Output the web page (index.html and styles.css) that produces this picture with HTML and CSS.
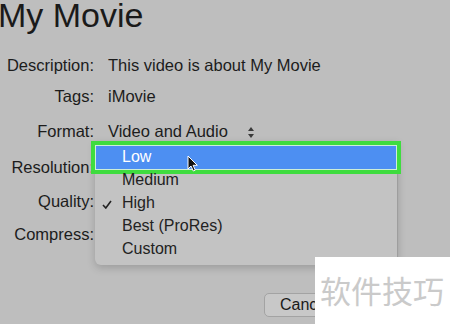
FILE: index.html
```html
<!DOCTYPE html>
<html lang="en">
<head>
    <meta charset="UTF-8">
    <title>My Movie - Share</title>
    <link rel="stylesheet" href="styles.css">
</head>
<body>
    <div class="window">
        <h1 class="title">My Movie</h1>

        <div class="form">
            <span class="label">Description:</span>
            <span class="value">This video is about My Movie</span>

            <span class="label">Tags:</span>
            <span class="value">iMovie</span>

            <span class="label">Format:</span>
            <span class="value">Video and Audio
                <svg class="stepper" width="6" height="11" viewBox="0 0 6 11">
                    <path d="M3 0 L6 4 L0 4 Z" fill="#3a3a3a"/>
                    <path d="M0 7 L6 7 L3 11 Z" fill="#3a3a3a"/>
                </svg>
            </span>

            <span class="label">Resolution:</span>
            <span class="value"></span>

            <span class="label">Quality:</span>
            <span class="value"></span>

            <span class="label">Compress:</span>
            <span class="value"></span>
        </div>

        <div class="footer">
            <button class="btn">Cancel</button>
        </div>

        <!-- popup menu for Quality -->
        <ul class="menu">
            <li class="item selected">Low</li>
            <li class="item">Medium</li>
            <li class="item">
                <svg class="check" width="10" height="9" viewBox="0 0 10 9">
                    <path d="M1 5 L3.8 8 L9 1" fill="none" stroke="#222" stroke-width="1.6"/>
                </svg>
                High
            </li>
            <li class="item">Best (ProRes)</li>
            <li class="item">Custom</li>
        </ul>

        <svg class="cursor" width="12" height="17" viewBox="0 0 12 17">
            <path d="M1 1 L1 14 L4 11 L6.3 16 L8.3 15.1 L6.1 10.3 L10.3 10.3 Z" fill="#111" stroke="#fff" stroke-width="1"/>
        </svg>

        <div class="watermark">软件技巧</div>
    </div>
</body>
</html>
```

FILE: styles.css
```css
body { margin: 0; background: #bebebe; font-family: "Liberation Sans", Arial, sans-serif; color: #1c1c1c; }
.window { position: relative; width: 450px; height: 324px; overflow: hidden; }
.title { margin: -3px 0 0 -2px; height: 36px; font-size: 34px; line-height: 36px; font-weight: normal; color: #1a1a1a; }
.form { margin-top: 22px; display: grid; grid-template-columns: 94px auto; grid-template-rows: 31px 35px 36px 34px 33px 20px; column-gap: 14px; font-size: 16.5px; line-height: 20px; }
.label { text-align: right; white-space: nowrap; }
.value { white-space: nowrap; }
.stepper { margin-left: 16px; vertical-align: -1px; }
.footer { margin-top: 49px; padding-left: 264px; }
.btn { width: 90px; height: 24px; padding: 0 0 0 15px; text-align: left; font-family: "Liberation Sans", Arial, sans-serif; font-size: 16px; color: #1a1a1a; background: #c8c8c8; border: 1px solid #a3a3a3; border-radius: 5px; }
.menu { position: absolute; left: 95px; top: 141px; width: 302px; margin: 0; padding: 5px 0 4px; list-style: none; background: #c3c3c3; border-right: 1px solid #9e9e9e; border-radius: 0 0 6px 6px; box-shadow: 0 3px 8px rgba(0, 0, 0, 0.18); font-size: 16px; color: #222; }
.item { position: relative; height: 23px; line-height: 22px; padding-left: 27px; }
.item.selected { margin: 0 1px; padding-left: 26px; background: #4d8ff2; color: #fff; box-shadow: 0 0 0 1px #cdeed8, 0 0 0 5px #3fdc3f; }
.check { position: absolute; left: 7px; top: 8px; }
.cursor { position: absolute; left: 187px; top: 155px; }
.watermark { position: absolute; left: 315px; top: 257px; right: 0; bottom: 0; padding: 17px 0 0 5px; background: #fff; color: #cacaca; font-family: "Noto Sans CJK SC", sans-serif; font-size: 31px; line-height: 31px; white-space: nowrap; }
```
